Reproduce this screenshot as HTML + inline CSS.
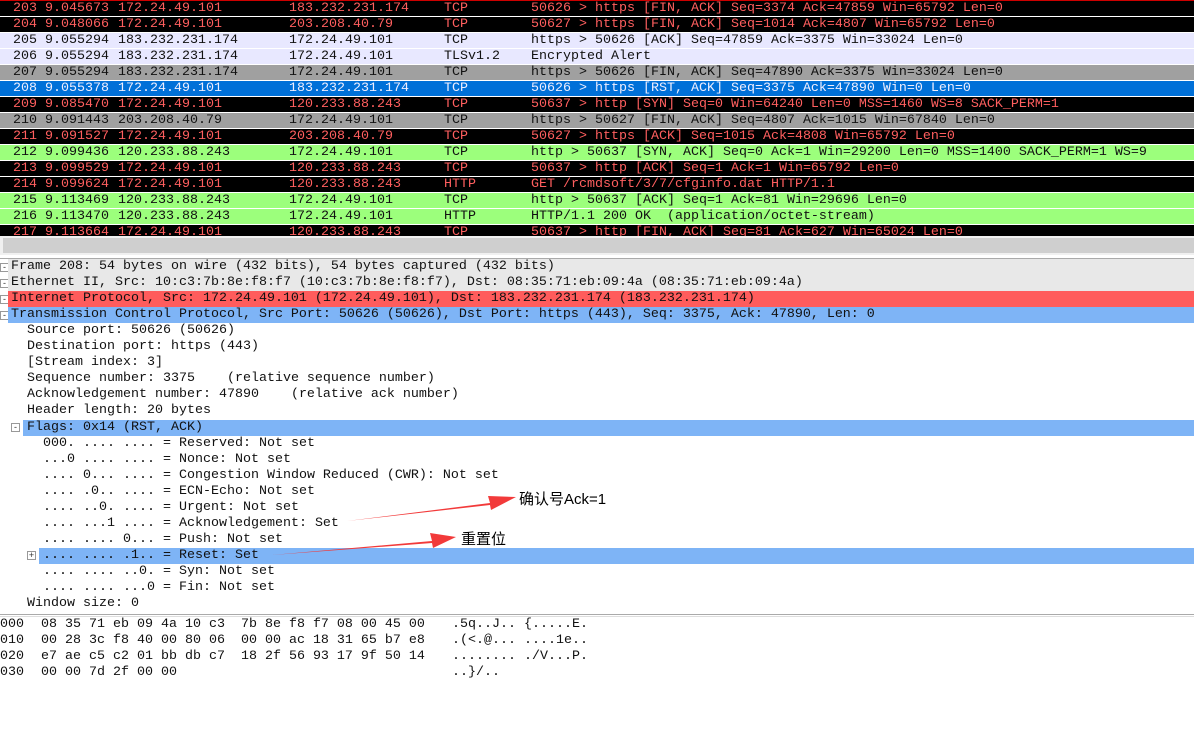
<!DOCTYPE html>
<html><head><meta charset="utf-8"><style>
*{margin:0;padding:0;box-sizing:border-box}
body{width:1194px;height:753px;background:#fff;position:relative;overflow:hidden;font-family:"Liberation Mono",monospace;font-size:13.33px;}
.r{position:absolute;left:0;width:1194px;height:15px;line-height:15px;white-space:pre;}
.r span{position:absolute;top:0}
.k{background:#000;color:#ff5f5f}
.l{background:#e8e8ff;color:#111}
.g{background:#a0a0a0;color:#111}
.s{background:#0070d8;color:#eef}
.gr{background:#9cff7c;color:#111}
.d{position:absolute;height:16px;line-height:16px;white-space:pre;color:#111}
.box{position:absolute;width:9px;height:9px;border:1px solid #999;background:#fff;font-size:9px;line-height:7px;text-align:center;color:#333;font-family:"Liberation Sans",sans-serif}
.h{position:absolute;white-space:pre;line-height:16px;color:#111}
</style></head><body>
<div style="position:absolute;left:0;top:0;width:1194px;height:1px;background:#c00"></div>
<div id="list"></div>
<script>
var rows=[
["k","203","9.045673","172.24.49.101","183.232.231.174","TCP","50626 > https [FIN, ACK] Seq=3374 Ack=47859 Win=65792 Len=0"],
["k","204","9.048066","172.24.49.101","203.208.40.79","TCP","50627 > https [FIN, ACK] Seq=1014 Ack=4807 Win=65792 Len=0"],
["l","205","9.055294","183.232.231.174","172.24.49.101","TCP","https > 50626 [ACK] Seq=47859 Ack=3375 Win=33024 Len=0"],
["l","206","9.055294","183.232.231.174","172.24.49.101","TLSv1.2","Encrypted Alert"],
["g","207","9.055294","183.232.231.174","172.24.49.101","TCP","https > 50626 [FIN, ACK] Seq=47890 Ack=3375 Win=33024 Len=0"],
["s","208","9.055378","172.24.49.101","183.232.231.174","TCP","50626 > https [RST, ACK] Seq=3375 Ack=47890 Win=0 Len=0"],
["k","209","9.085470","172.24.49.101","120.233.88.243","TCP","50637 > http [SYN] Seq=0 Win=64240 Len=0 MSS=1460 WS=8 SACK_PERM=1"],
["g","210","9.091443","203.208.40.79","172.24.49.101","TCP","https > 50627 [FIN, ACK] Seq=4807 Ack=1015 Win=67840 Len=0"],
["k","211","9.091527","172.24.49.101","203.208.40.79","TCP","50627 > https [ACK] Seq=1015 Ack=4808 Win=65792 Len=0"],
["gr","212","9.099436","120.233.88.243","172.24.49.101","TCP","http > 50637 [SYN, ACK] Seq=0 Ack=1 Win=29200 Len=0 MSS=1400 SACK_PERM=1 WS=9"],
["k","213","9.099529","172.24.49.101","120.233.88.243","TCP","50637 > http [ACK] Seq=1 Ack=1 Win=65792 Len=0"],
["k","214","9.099624","172.24.49.101","120.233.88.243","HTTP","GET /rcmdsoft/3/7/cfginfo.dat HTTP/1.1"],
["gr","215","9.113469","120.233.88.243","172.24.49.101","TCP","http > 50637 [ACK] Seq=1 Ack=81 Win=29696 Len=0"],
["gr","216","9.113470","120.233.88.243","172.24.49.101","HTTP","HTTP/1.1 200 OK  (application/octet-stream)"],
["k","217","9.113664","172.24.49.101","120.233.88.243","TCP","50637 > http [FIN, ACK] Seq=81 Ack=627 Win=65024 Len=0"]];
var h="";
rows.forEach(function(r,i){
 var t=1+16*i, hh=(i==14?(236-t):15);
 h+='<div class="r '+r[0]+'" style="top:'+t+'px;height:'+hh+'px;overflow:hidden">'+
 '<span style="left:13px;width:24px;text-align:right">'+r[1]+'</span>'+
 '<span style="left:45px">'+r[2]+'</span><span style="left:118px">'+r[3]+'</span>'+
 '<span style="left:289px">'+r[4]+'</span><span style="left:444px">'+r[5]+'</span>'+
 '<span style="left:531px">'+r[6].replace(/</g,'&lt;')+'</span></div>';
});
document.getElementById('list').innerHTML=h;
</script>
<div style="position:absolute;left:0;top:236px;width:1194px;height:19px;background:#f0f0f0"></div>
<div style="position:absolute;left:3px;top:238px;width:1191px;height:15px;background:#cfcfcf"></div>
<div style="position:absolute;left:0;top:258px;width:1194px;height:1px;background:#aaa"></div>

<div class="box" style="left:0;top:263px">-</div>
<div class="d" style="left:8px;top:259px;width:1186px;background:#e8e8e8;padding-left:3px">Frame 208: 54 bytes on wire (432 bits), 54 bytes captured (432 bits)</div>
<div class="box" style="left:0;top:279px">-</div>
<div class="d" style="left:8px;top:275px;width:1186px;background:#e8e8e8;padding-left:3px">Ethernet II, Src: 10:c3:7b:8e:f8:f7 (10:c3:7b:8e:f8:f7), Dst: 08:35:71:eb:09:4a (08:35:71:eb:09:4a)</div>
<div class="box" style="left:0;top:295px">-</div>
<div class="d" style="left:8px;top:291px;width:1186px;background:#ff5c5c;padding-left:3px">Internet Protocol, Src: 172.24.49.101 (172.24.49.101), Dst: 183.232.231.174 (183.232.231.174)</div>
<div class="box" style="left:0;top:311px">-</div>
<div class="d" style="left:8px;top:307px;width:1186px;background:#7eb4f6;padding-left:3px">Transmission Control Protocol, Src Port: 50626 (50626), Dst Port: https (443), Seq: 3375, Ack: 47890, Len: 0</div>
<div class="d" style="left:27px;top:323px">Source port: 50626 (50626)</div>
<div class="d" style="left:27px;top:339px">Destination port: https (443)</div>
<div class="d" style="left:27px;top:355px">[Stream index: 3]</div>
<div class="d" style="left:27px;top:371px">Sequence number: 3375    (relative sequence number)</div>
<div class="d" style="left:27px;top:387px">Acknowledgement number: 47890    (relative ack number)</div>
<div class="d" style="left:27px;top:403px">Header length: 20 bytes</div>
<div class="box" style="left:11px;top:423px">-</div>
<div class="d" style="left:23px;top:420px;width:1171px;background:#7eb4f6;padding-left:4px">Flags: 0x14 (RST, ACK)</div>
<div class="d" style="left:43px;top:436px">000. .... .... = Reserved: Not set</div>
<div class="d" style="left:43px;top:452px">...0 .... .... = Nonce: Not set</div>
<div class="d" style="left:43px;top:468px">.... 0... .... = Congestion Window Reduced (CWR): Not set</div>
<div class="d" style="left:43px;top:484px">.... .0.. .... = ECN-Echo: Not set</div>
<div class="d" style="left:43px;top:500px">.... ..0. .... = Urgent: Not set</div>
<div class="d" style="left:43px;top:516px">.... ...1 .... = Acknowledgement: Set</div>
<div class="d" style="left:43px;top:532px">.... .... 0... = Push: Not set</div>
<div class="box" style="left:27px;top:551px">+</div>
<div class="d" style="left:39px;top:548px;width:1155px;background:#7eb4f6;padding-left:4px">.... .... .1.. = Reset: Set</div>
<div class="d" style="left:43px;top:564px">.... .... ..0. = Syn: Not set</div>
<div class="d" style="left:43px;top:580px">.... .... ...0 = Fin: Not set</div>
<div class="d" style="left:27px;top:596px">Window size: 0</div>
<div style="position:absolute;left:0;top:614px;width:1194px;height:1px;background:#aaa"></div>
<div style="position:absolute;left:0;top:616px;width:1194px;height:1px;background:#ddd"></div>
<div class="h" style="left:0;top:617px">000
010
020
030</div>
<div class="h" style="left:41px;top:617px">08 35 71 eb 09 4a 10 c3  7b 8e f8 f7 08 00 45 00
00 28 3c f8 40 00 80 06  00 00 ac 18 31 65 b7 e8
e7 ae c5 c2 01 bb db c7  18 2f 56 93 17 9f 50 14
00 00 7d 2f 00 00</div>
<div class="h" style="left:452px;top:617px">.5q..J.. {.....E.
.(&lt;.@... ....1e..
........ ./V...P.
..}/..</div>

<svg style="position:absolute;left:0;top:0" width="1194" height="753">
<path d="M347 521 L490 503 L488 496 L516 497 L491 510 L490 505 Z" fill="#f23a3a"/>
<path d="M272 555 L432 541 L430 533 L456 537 L433 548 L432 543 Z" fill="#f23a3a"/>
</svg>
<div style="position:absolute;left:519px;top:488px;font-family:'Liberation Sans','Noto Sans CJK SC',sans-serif;font-size:15px;color:#000">确认号Ack=1</div>
<div style="position:absolute;left:461px;top:528px;font-family:'Liberation Sans','Noto Sans CJK SC',sans-serif;font-size:15px;color:#000">重置位</div>
</body></html>
